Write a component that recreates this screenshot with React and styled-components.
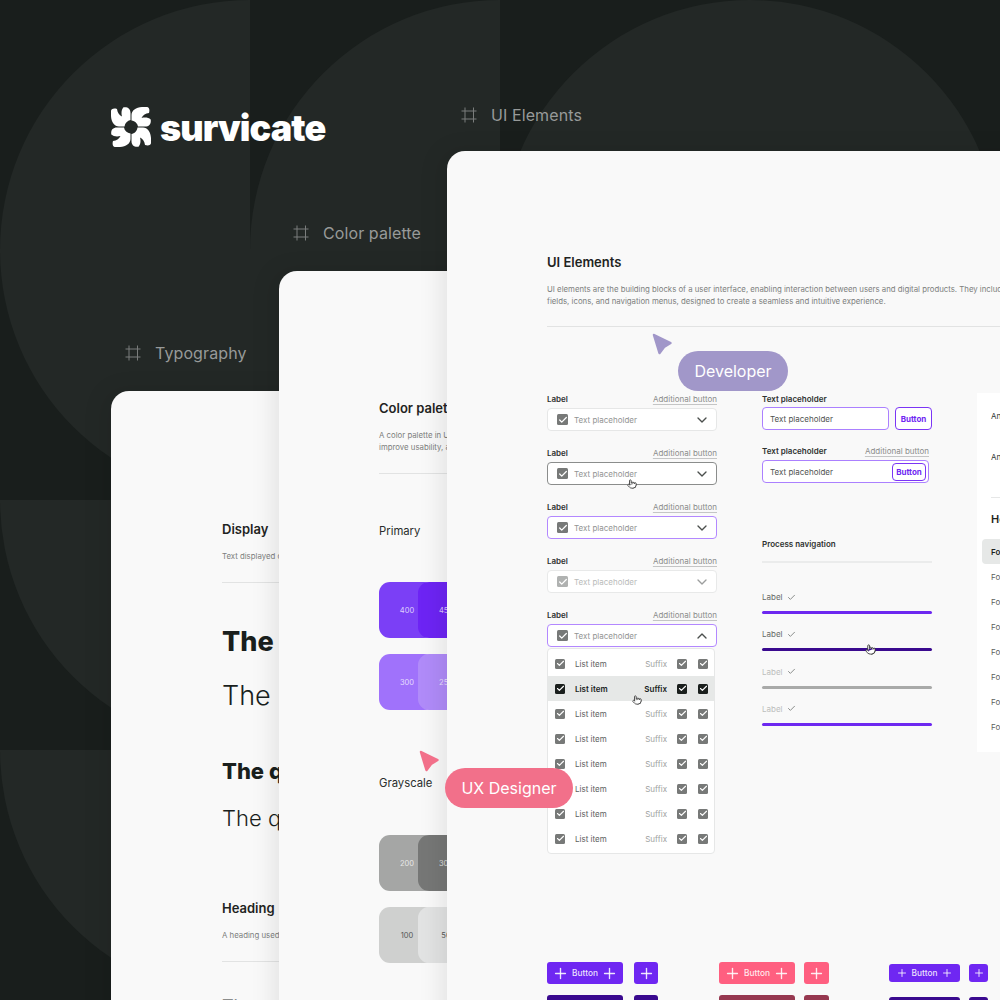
import React from "react";
import styled, { createGlobalStyle } from "styled-components";
import { Check, ChevronDown, ChevronUp, Plus, Pointer } from "lucide-react";

const GlobalStyle = createGlobalStyle`
  html, body {
    margin: 0;
    padding: 0;
    background: #191e1c;
    font-family: "Inter", "Liberation Sans", sans-serif;
  }
  * {
    box-sizing: border-box;
  }
`;

const Stage = styled.div`
  position: relative;
  width: 1000px;
  height: 1000px;
  overflow: hidden;
  background: #191e1c;
`;

const Backdrop = styled.svg`
  position: absolute;
  left: 0;
  top: 0;
`;

const Logo = styled.div`
  position: absolute;
  left: 111px;
  top: 107px;
  display: flex;
  align-items: center;
  gap: 9px;
  height: 40px;
`;

const LogoText = styled.span`
  font-family: "Inter", sans-serif;
  font-weight: 900;
  font-size: 36px;
  line-height: 40px;
  letter-spacing: -0.9px;
  color: #fff;
  margin-top: 2px;
`;

// frames sit on a free canvas, like windows
const Frame = styled.section`
  position: absolute;
  left: ${p => p.$left}px;
  top: ${p => p.$top}px;
  width: 1000px;
`;

const FrameLabel = styled.div`
  display: flex;
  align-items: center;
  gap: 14px;
  height: 16px;
  padding-left: 14px;
  margin-bottom: ${p => p.$gap}px;
  font-size: 16px;
  line-height: 16px;
  letter-spacing: 0.1px;
  color: #979a99;
`;

const Card = styled.div`
  height: 1000px;
  padding: ${p => p.$top}px 0 0 ${p => p.$left}px;
  background: #f9f9f9;
  border-radius: 18px 0 0 0;
  overflow: hidden;
  box-shadow: -6px 0 24px rgba(0, 0, 0, 0.09);
`;

const Title = styled.h2`
  margin: ${p => p.$top || 0}px 0 ${p => p.$gap || 13}px;
  font-size: 13px;
  line-height: 16px;
  font-weight: 600;
  color: #1f2422;
  white-space: nowrap;
`;

const Desc = styled.p`
  margin: 0;
  font-size: 7.8px;
  line-height: 12px;
  color: #7d7f7e;
  white-space: nowrap;
`;

const Divider = styled.div`
  height: 1px;
  margin-top: ${p => p.$top || 20}px;
  background: #e2e3e3;
`;

const DisplayLine = styled.div`
  margin-top: ${p => p.$top}px;
  font-size: ${p => p.$size}px;
  line-height: ${p => p.$size + 6}px;
  font-weight: ${p => p.$weight};
  color: ${p => p.$color || "#1a1f1d"};
  white-space: nowrap;
`;

const SectionName = styled.div`
  margin-top: ${p => p.$top}px;
  font-size: 11.3px;
  line-height: 16px;
  color: #2a2e2c;
`;

const SwatchRow = styled.div`
  display: flex;
  margin-top: ${p => p.$top}px;
`;

const Swatch = styled.div`
  display: flex;
  align-items: center;
  justify-content: center;
  width: 56px;
  height: 56px;
  margin-right: -17px;
  border-radius: 11px;
  font-size: 7.5px;
  background: ${p => p.$bg};
  color: ${p => p.$fg || "rgba(255, 255, 255, 0.75)"};
`;

const Columns = styled.div`
  display: flex;
  align-items: flex-start;
  margin-top: 66px;
`;

const FormColumn = styled.div`
  display: flex;
  flex-direction: column;
  width: 170px;
  margin-right: 45px;
`;

const Field = styled.div`
  position: relative;
  display: flex;
  flex-direction: column;
  margin-bottom: ${p => p.$gap ?? 16}px;
  width: ${p => p.$width || "100%"};
`;

const FieldHead = styled.div`
  display: flex;
  justify-content: space-between;
  align-items: center;
  height: 12px;
  margin-bottom: ${p => p.$gap ?? 3}px;
`;

const FieldLabel = styled.span`
  font-size: 8px;
  font-weight: 600;
  color: #2e3230;
`;

const AdditionalButton = styled.span`
  font-size: 8px;
  color: #8b8d8c;
  text-decoration: underline;
  text-decoration-color: #c4c5c5;
  text-underline-offset: 2px;
`;

const borders = {
  idle: "#e6e7e7",
  hover: "#8b8d8c",
  focus: "#b388ff",
  disabled: "#e8e9e9",
};

const SelectBox = styled.div`
  display: flex;
  align-items: center;
  gap: 6px;
  height: 23px;
  padding: 0 6px 0 9px;
  background: #fff;
  border: 1px solid ${p => borders[p.$state]};
  border-radius: 4px;
  font-size: 8px;
  color: ${p => (p.$state === "disabled" ? "#b9bbba" : "#929493")};
  svg.chevron {
    margin-left: auto;
    color: ${p => (p.$state === "disabled" ? "#9c9e9d" : "#4b4f4d")};
  }
`;

const Tick = styled.span`
  display: inline-flex;
  align-items: center;
  justify-content: center;
  flex: none;
  width: ${p => p.$size || 11}px;
  height: ${p => p.$size || 11}px;
  border-radius: 1.5px;
  background: ${p => p.$bg || "#777978"};
  color: #fff;
`;

const Hand = styled(Pointer)`
  position: absolute;
  left: ${p => p.$x}px;
  top: ${p => p.$y}px;
  fill: #fff;
  color: #333;
`;

const Dropdown = styled.div`
  width: 168px;
  margin-top: -15px;
  padding: 2px 0;
  background: #fff;
  border: 1px solid #e6e7e7;
  border-radius: 4px;
`;

const ListRow = styled.div`
  position: relative;
  display: flex;
  align-items: center;
  height: 25px;
  padding: 0 6px 0 7px;
  font-size: 8px;
  font-weight: ${p => (p.$active ? 600 : 400)};
  background: ${p => (p.$active ? "#e6e8e7" : "transparent")};
  color: ${p => (p.$active ? "#1a1f1d" : "#5d605e")};
`;

const ListText = styled.span`
  flex: 1;
  margin-left: 10px;
`;

const Suffix = styled.span`
  margin-right: 10px;
  color: ${p => (p.$active ? "#1a1f1d" : "#a0a2a1")};
`;

const TickGap = styled.span`
  width: 11px;
  flex: none;
`;

const FieldRow = styled.div`
  display: flex;
  gap: 6px;
`;

const TextInput = styled.div`
  display: flex;
  align-items: center;
  justify-content: space-between;
  flex: 1 0 auto;
  height: 23px;
  padding: 0 2px 0 7px;
  background: #fff;
  border: 1px solid #ab80ff;
  border-radius: 4px;
  font-size: 8px;
  color: #4f5351;
`;

const OutlineButton = styled.div`
  display: flex;
  align-items: center;
  justify-content: center;
  width: ${p => p.$width}px;
  height: ${p => p.$height}px;
  background: #fff;
  border: 1.5px solid #7b35f5;
  border-radius: 4px;
  font-size: 8px;
  font-weight: 700;
  color: #6f27f2;
`;

const ProcessTitle = styled.div`
  margin-top: 55px;
  height: 12px;
  font-size: 8px;
  line-height: 12px;
  font-weight: 600;
  color: #2e3230;
`;

const ProcessLine = styled.div`
  height: 2px;
  margin: 11px 0 28px;
  background: #ebecec;
`;

const Step = styled.div`
  position: relative;
  display: flex;
  flex-direction: column;
  height: 37.3px;
`;

const StepLabel = styled.div`
  display: flex;
  align-items: center;
  gap: 4px;
  height: 12px;
  margin-bottom: 8px;
  font-size: 8px;
  color: ${p => (p.$muted ? "#bcbebd" : "#666967")};
  svg {
    color: #666967;
  }
`;

const StepBar = styled.div`
  height: 3px;
  border-radius: 2px;
  background: ${p => p.$color};
`;

const SidePanel = styled.div`
  width: 200px;
  height: 359px;
  padding: 0 0 0 14px;
  background: #fff;
`;

const SideOption = styled.div`
  height: ${p => p.$height}px;
  font-size: 8px;
  line-height: 46px;
  color: #333735;
`;

const SideRule = styled.div`
  height: 1px;
  margin-top: 22px;
  background: #e6e7e7;
`;

const SideHeading = styled.div`
  margin: 13px 0 12px;
  font-size: 11px;
  line-height: 16px;
  font-weight: 600;
  color: #1f2422;
`;

const SideItem = styled.div`
  display: flex;
  align-items: center;
  height: 25px;
  margin-left: ${p => (p.$active ? -9 : 0)}px;
  padding-left: ${p => (p.$active ? 9 : 0)}px;
  font-size: 8px;
  font-weight: ${p => (p.$active ? 600 : 400)};
  color: ${p => (p.$active ? "#1a1f1d" : "#5d605e")};
  background: ${p => (p.$active ? "#e6e8e7" : "transparent")};
  border-radius: 4px 0 0 4px;
`;

const ButtonGrid = styled.div`
  display: grid;
  grid-template-columns: 172px 170px 160px;
  row-gap: 11px;
  margin-top: 108px;
`;

const ButtonGroup = styled.div`
  display: flex;
  align-items: center;
  gap: ${p => p.$gap}px;
  height: 22px;
`;

const SolidButton = styled.div`
  display: flex;
  align-items: center;
  justify-content: center;
  gap: ${p => p.$inner}px;
  width: ${p => p.$width}px;
  height: ${p => p.$height}px;
  border-radius: 3px;
  background: ${p => p.$bg};
  font-size: 8.3px;
  font-weight: 500;
  color: rgba(255, 255, 255, 0.88);
`;

// cursors of the people in the file, lying over the cards
const Pill = styled.div`
  position: absolute;
  left: ${p => p.$left}px;
  top: ${p => p.$top}px;
  display: flex;
  align-items: center;
  justify-content: center;
  width: ${p => p.$width}px;
  height: 40px;
  border-radius: 20px;
  background: ${p => p.$bg};
  font-size: 16px;
  color: #fff;
`;

const Arrow = styled.svg`
  position: absolute;
  left: ${p => p.$left}px;
  top: ${p => p.$top}px;
  color: ${p => p.$color};
`;

const FrameIcon = () => (
  <svg width="16" height="16" viewBox="0 0 16 16" fill="none" stroke="#7a7d7c" strokeWidth="1">
    <path d="M4 0.5V15.5M12.5 0.5V15.5M0.5 4H15.5M0.5 12H15.5" />
  </svg>
);

const CursorArrow = props => (
  <Arrow width="22" height="24" viewBox="0 0 22 24" {...props}>
    <path
      d="M3 3L19.5 11L13 15L8.5 21Z"
      fill="currentColor"
      stroke="currentColor"
      strokeWidth="2.5"
      strokeLinejoin="round"
    />
  </Arrow>
);

const LogoMark = () => (
  <svg width="40" height="40" viewBox="0 0 40 40" fill="#fff">
    {[0, 90, 180, 270].map(angle => (
      <path
        key={angle}
        transform={`rotate(${angle} 20 20)`}
        d="M0 4C0 2 2.5 1 6 2C6.5 5.5 8 8 11 9.5C10 6 10.5 2.5 12.5 0.3C16.5 -0.3 19.5 1.5 19.5 6V13C16.5 13.5 14 16 13.5 19.5H8C3.5 19.5 0.3 15 0 9Z"
      />
    ))}
  </svg>
);

const CheckBox = ({ size = 11, bg }) => (
  <Tick $size={size} $bg={bg}>
    <Check size={size - 1} strokeWidth={3} />
  </Tick>
);

const SelectField = ({ state, up, hand, gap }) => (
  <Field $gap={gap}>
    <FieldHead>
      <FieldLabel>Label</FieldLabel>
      <AdditionalButton>Additional button</AdditionalButton>
    </FieldHead>
    <SelectBox $state={state}>
      <CheckBox bg={state === "disabled" ? "#b0b2b1" : undefined} />
      Text placeholder
      {up ? <ChevronUp className="chevron" size={16} /> : <ChevronDown className="chevron" size={16} />}
    </SelectBox>
    {hand && <Hand size={10} $x={80} $y={32} />}
  </Field>
);

const ListItem = ({ active }) => {
  const bg = active ? "#1a1f1d" : undefined;
  return (
    <ListRow $active={active}>
      <CheckBox size={10} bg={bg} />
      <ListText>List item</ListText>
      <Suffix $active={active}>Suffix</Suffix>
      <CheckBox size={10} bg={bg} />
      <TickGap />
      <CheckBox size={10} bg={bg} />
      {active && <Hand size={10} $x={84} $y={19} />}
    </ListRow>
  );
};

const ButtonSet = ({ bg, width, height, iconWidth, gap, iconSize = 17, inner = 3.5 }) => (
  <ButtonGroup $gap={gap}>
    <SolidButton $bg={bg} $width={width} $height={height} $inner={inner}>
      <Plus size={iconSize} strokeWidth={1.9} />
      Button
      <Plus size={iconSize} strokeWidth={1.9} />
    </SolidButton>
    <SolidButton $bg={bg} $width={iconWidth} $height={height} $inner={0}>
      <Plus size={iconSize} strokeWidth={1.9} />
    </SolidButton>
  </ButtonGroup>
);

export default function App() {
  return (
    <Stage>
      <GlobalStyle />
      <Backdrop width="1000" height="1000" viewBox="0 0 1000 1000" fill="#232826">
        <path d="M0 250A250 250 0 0 1 250 0V500H250A250 250 0 0 1 0 250Z" />
        <path d="M250 250A250 250 0 0 1 500 0V500H250Z" />
        <path d="M500 250A250 250 0 0 1 1000 250V500H500Z" />
        <path d="M0 500H500V750H250A250 250 0 0 1 0 500Z" />
        <path d="M0 750H500V1000H250A250 250 0 0 1 0 750Z" />
      </Backdrop>

      <Logo>
        <LogoMark />
        <LogoText>survicate</LogoText>
      </Logo>

      <Frame $left={111} $top={345}>
        <FrameLabel $gap={30}>
          <FrameIcon />
          Typography
        </FrameLabel>
        <Card $top={130} $left={111}>
          <Title>Display</Title>
          <Desc>Text displayed on large surfaces such as headers and hero sections.</Desc>
          <Divider />
          <DisplayLine $top={42} $size={27} $weight={800}>The quick brown fox</DisplayLine>
          <DisplayLine $top={21} $size={27} $weight={300}>The quick brown fox</DisplayLine>
          <DisplayLine $top={45} $size={22} $weight={800}>The quick brown fox</DisplayLine>
          <DisplayLine $top={19} $size={22} $weight={300}>The quick brown fox</DisplayLine>
          <Title as="h3" $top={68}>Heading</Title>
          <Desc>A heading used to introduce a section of content on the page.</Desc>
          <Divider />
          <DisplayLine $top={33} $size={18} $weight={400} $color="#8b8d8c">The quick brown fox</DisplayLine>
        </Card>
      </Frame>

      <Frame $left={279} $top={225}>
        <FrameLabel $gap={30}>
          <FrameIcon />
          Color palette
        </FrameLabel>
        <Card $top={129} $left={100}>
          <Title>Color palette</Title>
          <Desc>
            A color palette in UI design is a curated selection of colors used to create harmony and
            <br />
            improve usability, accessibility and brand recognition.
          </Desc>
          <Divider />
          <SectionName $top={49}>Primary</SectionName>
          <SwatchRow $top={43}>
            <Swatch $bg="#7b3ff6">400</Swatch>
            <Swatch $bg="#6d24f4">450</Swatch>
          </SwatchRow>
          <SwatchRow $top={16}>
            <Swatch $bg="#a072fb">300</Swatch>
            <Swatch $bg="#b08bf9">250</Swatch>
          </SwatchRow>
          <SectionName $top={65}>Grayscale</SectionName>
          <SwatchRow $top={44}>
            <Swatch $bg="#a5a6a5">200</Swatch>
            <Swatch $bg="#767776">300</Swatch>
          </SwatchRow>
          <SwatchRow $top={16}>
            <Swatch $bg="#cfd0cf" $fg="#555856">100</Swatch>
            <Swatch $bg="#e2e3e3" $fg="#555856">50</Swatch>
          </SwatchRow>
        </Card>
      </Frame>

      <Frame $left={447} $top={107}>
        <FrameLabel $gap={28}>
          <FrameIcon />
          UI Elements
        </FrameLabel>
        <Card $top={103} $left={100}>
          <Title>UI Elements</Title>
          <Desc>
            UI elements are the building blocks of a user interface, enabling interaction between users and digital products. They include buttons, input
            <br />
            fields, icons, and navigation menus, designed to create a seamless and intuitive experience.
          </Desc>
          <Divider $top={19} />

          <Columns>
            <FormColumn>
              <SelectField state="idle" />
              <SelectField state="hover" hand />
              <SelectField state="focus" />
              <SelectField state="disabled" />
              <SelectField state="focus" up />
              <Dropdown>
                <ListItem />
                <ListItem active />
                <ListItem />
                <ListItem />
                <ListItem />
                <ListItem />
                <ListItem />
                <ListItem />
              </Dropdown>
            </FormColumn>

            <FormColumn>
              <Field $gap={15}>
                <FieldHead $gap={2}>
                  <FieldLabel>Text placeholder</FieldLabel>
                </FieldHead>
                <FieldRow>
                  <TextInput>Text placeholder</TextInput>
                  <OutlineButton $width={37} $height={23}>Button</OutlineButton>
                </FieldRow>
              </Field>
              <Field $gap={0} $width="167px">
                <FieldHead>
                  <FieldLabel>Text placeholder</FieldLabel>
                  <AdditionalButton>Additional button</AdditionalButton>
                </FieldHead>
                <TextInput>
                  Text placeholder
                  <OutlineButton $width={34} $height={18}>Button</OutlineButton>
                </TextInput>
              </Field>
              <ProcessTitle>Process navigation</ProcessTitle>
              <ProcessLine />
              <Step>
                <StepLabel>Label <Check size={9} /></StepLabel>
                <StepBar $color="#6d28f0" />
              </Step>
              <Step>
                <StepLabel>Label <Check size={9} /></StepLabel>
                <StepBar $color="#3a0a8f" />
                <Hand size={11} $x={103} $y={16} />
              </Step>
              <Step>
                <StepLabel $muted>Label <Check size={9} /></StepLabel>
                <StepBar $color="#a9aaa9" />
              </Step>
              <Step>
                <StepLabel $muted>Label <Check size={9} /></StepLabel>
                <StepBar $color="#6d28f0" />
              </Step>
            </FormColumn>

            <SidePanel>
              <SideOption $height={41}>Answer</SideOption>
              <SideOption $height={41}>Answer</SideOption>
              <SideRule />
              <SideHeading>Heading</SideHeading>
              <SideItem $active>Font</SideItem>
              {[1, 2, 3, 4, 5, 6, 7].map(i => (
                <SideItem key={i}>Font</SideItem>
              ))}
            </SidePanel>
          </Columns>

          <ButtonGrid>
            <ButtonSet bg="#6f27f2" width={76} height={22} iconWidth={24} gap={11} />
            <ButtonSet bg="#ff5f80" width={76} height={22} iconWidth={25} gap={9} />
            <ButtonSet bg="#6f27f2" width={71} height={18} iconWidth={19} gap={9} iconSize={12} inner={4} />
            <ButtonSet bg="#3a0a8f" width={76} height={22} iconWidth={24} gap={11} />
            <ButtonSet bg="#963850" width={76} height={22} iconWidth={25} gap={9} />
            <ButtonSet bg="#3a0a8f" width={71} height={18} iconWidth={19} gap={9} iconSize={12} inner={4} />
          </ButtonGrid>
        </Card>
      </Frame>

      <CursorArrow $left={651} $top={332} $color="#a197c9" />
      <Pill $left={678} $top={351} $width={110} $bg="#a197c9">Developer</Pill>
      <CursorArrow $left={418} $top={749} $color="#f2708a" />
      <Pill $left={445} $top={768} $width={128} $bg="#f2708a">UX Designer</Pill>
    </Stage>
  );
}
